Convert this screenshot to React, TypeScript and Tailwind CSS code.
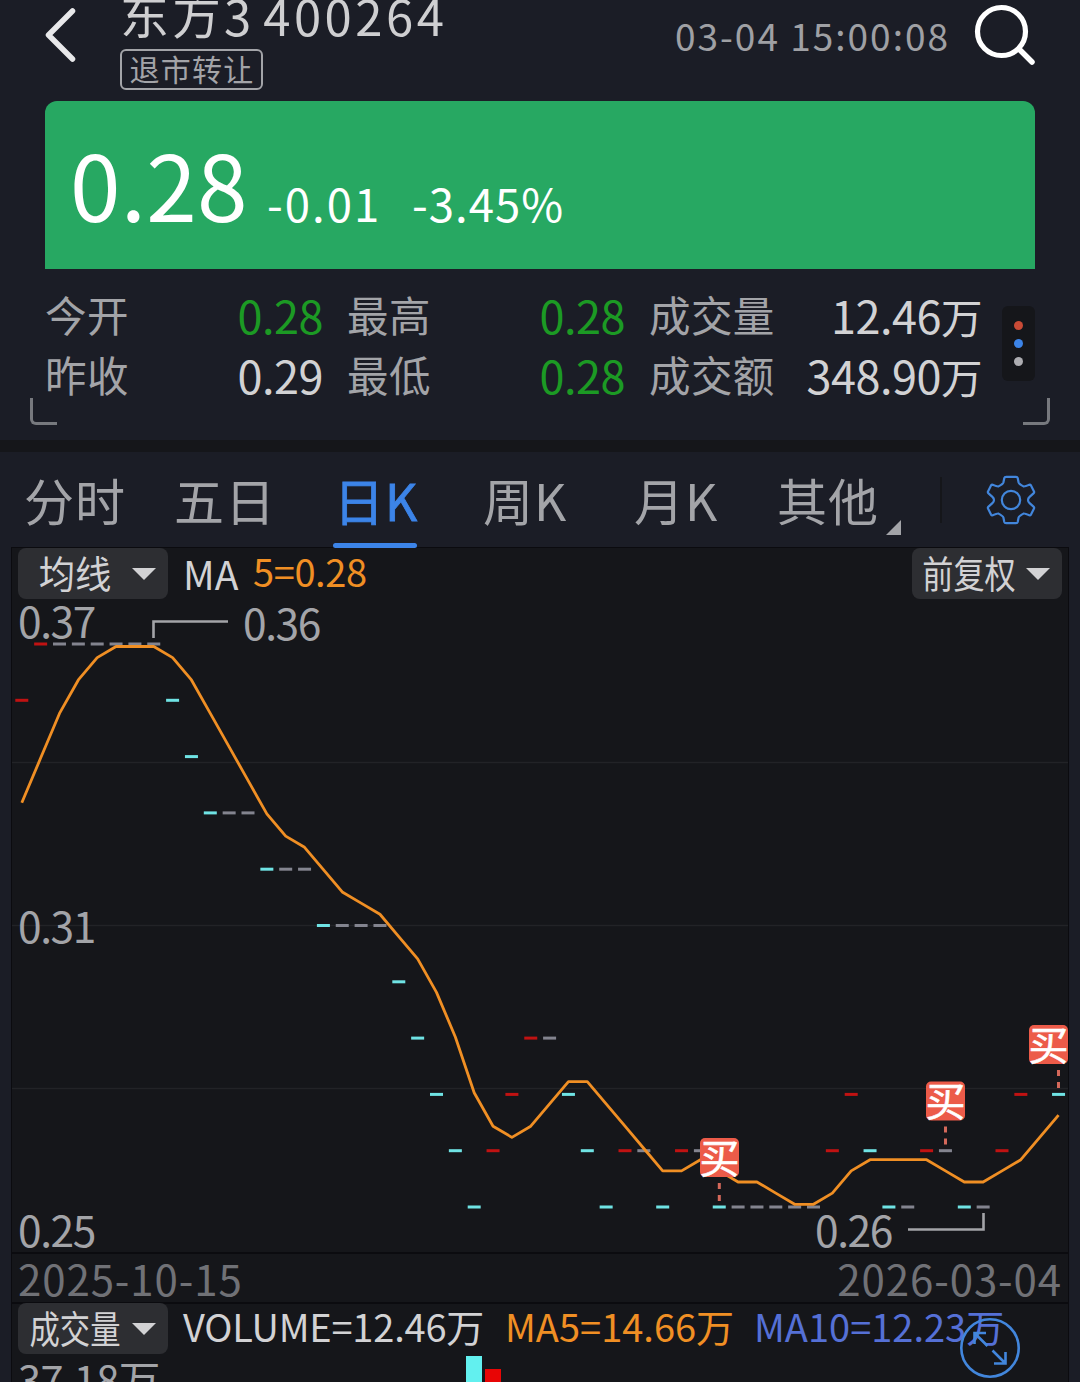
import React, { useState } from 'react';

// price of every candle and its colour: r = up, c = down, g = flat
const candles: [number, string][] = [
    [35, 'r'], [36, 'r'], [36, 'g'], [36, 'g'], [36, 'g'], [36, 'g'], [36, 'g'], [36, 'g'],
    [35, 'c'], [34, 'c'], [33, 'c'], [33, 'g'], [33, 'g'], [32, 'c'], [32, 'g'], [32, 'g'],
    [31, 'c'], [31, 'g'], [31, 'g'], [31, 'g'], [30, 'c'], [29, 'c'], [28, 'c'], [27, 'c'],
    [26, 'c'], [27, 'r'], [28, 'r'], [29, 'r'], [29, 'g'], [28, 'c'], [27, 'c'], [26, 'c'],
    [27, 'r'], [27, 'g'], [26, 'c'], [27, 'r'], [27, 'g'], [26, 'c'], [26, 'g'], [26, 'g'],
    [26, 'g'], [26, 'g'], [26, 'g'], [27, 'r'], [28, 'r'], [27, 'c'], [26, 'c'], [26, 'g'],
    [27, 'r'], [27, 'g'], [26, 'c'], [26, 'g'], [27, 'r'], [28, 'r'], [29, 'r'], [28, 'c'],
];

const colors: Record<string, string> = { r: '#c01212', c: '#6fe3e4', g: '#83848f' };

const firstMa = [33.2, 34, 34.8, 35.4];

const getX = (i: number) => 21.8 + i * 18.85;
const getY = (p: number) => 644 + (36 - p) * 56.3;

const maPoints = candles
    .map((_, i) => {
        const avg = i < 4
            ? firstMa[i]
            : candles.slice(i - 4, i + 1).reduce((sum, c) => sum + c[0], 0) / 5;
        return `${getX(i)},${646.5 + (36 - avg) * 55.78}`;
    })
    .join(' ');

const buys = [
    { left: 700, top: 1138, x: 719.3 },
    { left: 926, top: 1081.5, x: 945.5 },
    { left: 1029, top: 1025, x: 1058.5 },
];

const stats = [
    { label: '今开', value: '0.28', green: true, width: 'w-[278px]' },
    { label: '最高', value: '0.28', green: true, width: 'w-[278px]' },
    { label: '成交量', value: '12.46', unit: '万', width: 'w-[333px]' },
    { label: '昨收', value: '0.29', width: 'w-[278px]' },
    { label: '最低', value: '0.28', green: true, width: 'w-[278px]' },
    { label: '成交额', value: '348.90', unit: '万', width: 'w-[333px]' },
];

const tabs = [
    { name: '分时', width: 'w-[150px]' },
    { name: '五日', width: 'w-[160px]' },
    { name: '日K', width: 'w-[149px]' },
    { name: '周K', width: 'w-[151px]' },
    { name: '月K', width: 'w-[143px]' },
    { name: '其他', width: 'w-[101px]' },
];

function Header() {
    return (
        <header className="flex h-[101px] items-start pl-[45px]">
            <svg className="mt-[7px] h-14 w-[31px]" viewBox="0 0 31 56" fill="none">
                <path d="M27.5 4 L3.5 28 L27.5 52" stroke="#e8e8ea" strokeWidth="5.5" strokeLinecap="round" strokeLinejoin="round" />
            </svg>
            <div className="ml-11">
                <div className="-mt-[11px] flex h-[50px] text-[49px] leading-[50px] tracking-[3px] text-[#cfcfd1]">
                    <span className="-mt-px">东方</span>
                    <span className="mt-px">3</span>
                    <span className="mt-px ml-[9px] tracking-[3.5px]">400264</span>
                </div>
                <div className="mt-[10px] flex h-[41px] w-[143px] items-center justify-center rounded-md border-2 border-[#a3a4a8] pb-[3px] pl-px text-[30px] leading-none tracking-[1.2px] text-[#a3a4a8]">
                    退市转让
                </div>
            </div>
            <div className="mt-[17px] ml-auto text-[37px] leading-none tracking-[2px] whitespace-nowrap text-[#9fa0a4]">
                03-04 15:00:08
            </div>
            <svg className="mt-1 mr-11 ml-6 h-[62px] w-[62px]" viewBox="974 4 62 62" fill="none">
                <circle cx="1001.5" cy="31.5" r="24" stroke="#fff" strokeWidth="5.2" />
                <path d="M1019 49 L1032 62" stroke="#fff" strokeWidth="5.5" strokeLinecap="round" />
            </svg>
        </header>
    );
}

function Stats() {
    return (
        <div className="relative h-[171px] pt-[14px] pl-[45px]">
            <div className="flex">
                <div className="grid w-[938px] grid-cols-[280px_280px_334px] gap-x-[22px] pt-px">
                    {stats.map((s) => (
                        <div key={s.label} className={`flex h-[60px] justify-between leading-[60px] ${s.width}`}>
                            <span className="text-[41.5px] tracking-[0.4px] text-[#a3a4a8]">{s.label}</span>
                            <span className={`mt-px text-[45px] tracking-[-0.5px] ${s.green ? 'text-[#1c9a24]' : 'text-[#d2d2d4]'}`}>
                                {s.value}
                                {s.unit && <span className="text-[41.5px]">{s.unit}</span>}
                            </span>
                        </div>
                    ))}
                </div>
                <div className="mt-[23px] ml-[19px] flex h-[75px] w-[33px] flex-col items-center justify-center gap-[9px] rounded-md bg-[#15161a]">
                    <i className="size-[9px] rounded-full bg-[#c94b36]" />
                    <i className="size-[9px] rounded-full bg-[#3c84e8]" />
                    <i className="size-[9px] rounded-full bg-[#adadb1]" />
                </div>
            </div>
            <div className="absolute bottom-[15px] left-[30px] size-[27px] rounded-bl-md border-b-[3px] border-l-[3px] border-[#77797e]" />
            <div className="absolute right-[30px] bottom-[15px] size-[27px] rounded-br-md border-r-[3px] border-b-[3px] border-[#77797e]" />
        </div>
    );
}

function SelectButton({ text, scale }: { text: string; scale: string }) {
    return (
        <button className="flex h-[51px] w-[150px] shrink-0 items-center rounded-lg bg-[#2d2e32] text-[#d2d2d4]">
            <span className={`flex w-[114px] justify-center pb-[4px] text-[37.5px] leading-none whitespace-nowrap ${scale}`}>{text}</span>
            <svg className="h-3 w-6" viewBox="0 0 24 12">
                <path d="M0 0 H24 L12 12 Z" fill="#d2d2d4" />
            </svg>
        </button>
    );
}

function Plot() {
    return (
        <svg className="-mt-[51px] block h-[704px] w-[1056px]" viewBox="12 548 1056 704" fill="none">
            {[762.5, 925.5, 1088.5].map((y) => (
                <path key={y} d={`M12 ${y} H1068`} stroke="#222327" strokeWidth="1.5" />
            ))}
            {candles.map(([p, c], i) => (
                <rect key={i} x={getX(i) - 6.5} y={getY(p) - 1.5} width="13" height="3" fill={colors[c]} />
            ))}
            <polyline points={maPoints} stroke="#f08f24" strokeWidth="2.8" strokeLinejoin="round" />
            <path d="M153.5 638 V621.5 H228 M908 1229.5 H983.5 V1213" stroke="#a3a4a8" strokeWidth="2.6" />
            <g className="text-[42.5px] tracking-[-1.4px]" fill="#a3a4a8">
                <text x="18" y="638">0.37</text>
                <text x="243" y="639.5">0.36</text>
                <text x="18" y="943">0.31</text>
                <text x="18" y="1247">0.25</text>
                <text x="815" y="1247">0.26</text>
            </g>
            {buys.map((b) => (
                <g key={b.left}>
                    <rect x={b.left} y={b.top} width="39" height="39" rx="5" fill="#ec5b49" />
                    <text x={b.left - 0.5} y={b.top + 34.5} fill="#fff" stroke="#fff" strokeWidth="0.6" className="text-[40px]">买</text>
                    <path d={`M${b.x} ${b.top + 45} v18`} stroke="#d4685a" strokeWidth="3" strokeDasharray="6 6" />
                </g>
            ))}
        </svg>
    );
}

export default function App() {
    const [active, setActive] = useState('日K');

    return (
        <div lang="zh-CN" className="h-[1382px] w-[1080px] overflow-hidden bg-[#1b1d26] font-['Noto_Sans_CJK_SC',sans-serif]">
            <Header />

            <div className="mx-[45px] flex h-[168px] items-baseline rounded-t-xl bg-[#27a862] pt-[36px] pl-[25px] leading-[90px] text-white">
                <span className="w-[197px] text-[91px] tracking-[0.2px]">0.28</span>
                <span className="w-[145px] text-[45.5px] tracking-[2px]">-0.01</span>
                <span className="text-[45.5px] tracking-[1px]">-3.45%</span>
            </div>

            <Stats />

            <nav className="flex h-[108px] border-t-[12px] border-[#15161a] pl-[24px] text-[50px] leading-[94px] text-[#a3a4a8]">
                {tabs.map((t) => (
                    <div
                        key={t.name}
                        onClick={() => setActive(t.name)}
                        className={`relative cursor-pointer tracking-[1px] whitespace-nowrap ${t.width} ${active === t.name ? 'text-[#3c84e8] [-webkit-text-stroke:0.8px_#3c84e8]' : ''}`}
                    >
                        {t.name}
                        {active === t.name && (
                            <span className="absolute bottom-0 -left-px h-[5px] w-[84px] rounded-sm bg-[#3c84e8]" />
                        )}
                    </div>
                ))}
                <svg className="mt-[68px] ml-[8px] size-[15px]" viewBox="0 0 15 15">
                    <path d="M15 0 V15 H0 Z" fill="#a3a4a8" />
                </svg>
                <div className="mt-[25px] ml-[39px] h-[46px] w-[2px] bg-[#15161a]" />
                <svg className="mt-[23px] ml-[44px] size-[50px]" viewBox="-25 -25 50 50" fill="none" stroke="#4286dc" strokeWidth="2.2" strokeLinejoin="round">
                    <path d="M-4.8 -23.2 H4.8 Q6.4 -23.2 6.7 -22 L7.6 -17.5 Q8 -16 12.5 -13.6 Q13.5 -13.2 18.3 -15.3 Q19.3 -15.6 20 -14.6 L23 -8.6 Q23.5 -7.5 22.5 -6.6 L18.6 -3.2 Q17 -1.8 17 0 Q17 1.8 18.6 3.2 L22.5 6.6 Q23.5 7.5 23 8.6 L20 14.6 Q19.3 15.6 18.3 15.3 Q13.5 13.2 12.5 13.6 Q8 16 7.6 17.5 L6.7 22 Q6.4 23.2 4.8 23.2 H-4.8 Q-6.4 23.2 -6.7 22 L-7.6 17.5 Q-8 16 -12.5 13.6 Q-13.5 13.2 -18.3 15.3 Q-19.3 15.6 -20 14.6 L-23 8.6 Q-23.5 7.5 -22.5 6.6 L-18.6 3.2 Q-17 1.8 -17 0 Q-17 -1.8 -18.6 -3.2 L-22.5 -6.6 Q-23.5 -7.5 -23 -8.6 L-20 -14.6 Q-19.3 -15.6 -18.3 -15.3 Q-13.5 -13.2 -12.5 -13.6 Q-8 -16 -7.6 -17.5 L-6.7 -22 Q-6.4 -23.2 -4.8 -23.2 Z" />
                    <circle r="9.2" />
                </svg>
            </nav>

            <main className="mx-[12px] h-[834px] bg-[#15161a] shadow-[0_0_0_1px_#0b0b0f]">
                <div className="relative flex h-[51px] justify-between px-[6px]">
                    <div className="flex">
                        <SelectButton text="均线" scale="scale-x-[0.97]" />
                        <span className="ml-[15px] w-[70px] text-[39px] leading-[50px] text-[#d2d2d4]">MA</span>
                        <span className="text-[38px] leading-[46px] tracking-[-0.4px] text-[#f08f24]">5=0.28</span>
                    </div>
                    <SelectButton text="前复权" scale="scale-x-[0.83]" />
                </div>

                <Plot />

                <div className="flex h-[52px] justify-between border-y-2 border-[#0b0b0f] px-[6px] text-[42px] leading-[48px] tracking-[0.9px] text-[#707176]">
                    <span>2025-10-15</span>
                    <span>2026-03-04</span>
                </div>

                <div className="relative -mt-px flex h-[51px] pl-[6px] text-[38px] leading-[46px] whitespace-nowrap">
                    <SelectButton text="成交量" scale="scale-x-[0.81]" />
                    <span className="ml-[15px] w-[322px] tracking-[-0.2px] text-[#d2d2d4]">VOLUME=12.46万</span>
                    <span className="w-[249px] text-[#f08f24]">MA5=14.66万</span>
                    <span className="text-[#5570d6]">MA10=12.23万</span>
                    <svg className="absolute top-[14px] left-[947px] size-[62px]" viewBox="-31 -31 62 62" fill="none" stroke="#4286dc" strokeWidth="2.6">
                        <circle r="28.7" />
                        <path d="M-2.5 -2 L-15 -14.5 M-4 -15 H-15.5 V-4 M2.5 2.5 L15 15 M4 15.5 H15.5 V4" />
                    </svg>
                </div>

                <div className="flex h-7 items-start overflow-hidden pl-[6px]">
                    <span className="w-[448px] text-[41.5px] leading-[49px] tracking-[-0.6px] text-[#a3a4a8]">37.18万</span>
                    <span className="mt-[2px] h-[26px] w-4 bg-[#62f0ef]" />
                    <span className="mt-[15px] ml-[3px] h-[13px] w-4 bg-[#e80505]" />
                </div>
            </main>
        </div>
    );
}
